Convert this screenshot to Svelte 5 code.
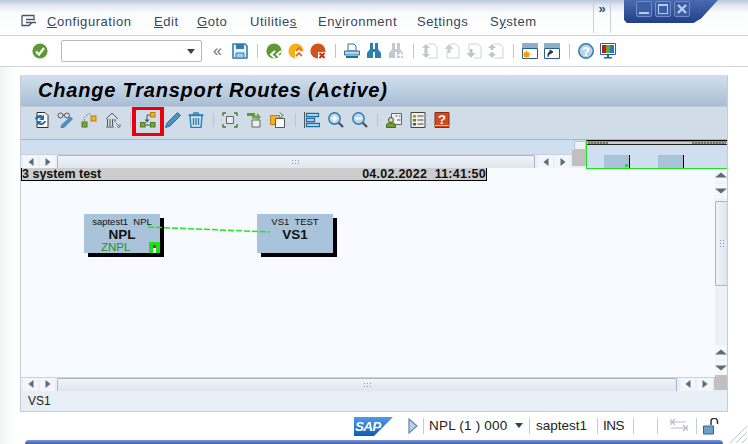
<script>
  const menus = [
    { pre: "", key: "C", post: "onfiguration", w: 107 },
    { pre: "", key: "E", post: "dit", w: 43 },
    { pre: "", key: "G", post: "oto", w: 53 },
    { pre: "Utilitie", key: "s", post: "", w: 68 },
    { pre: "En", key: "v", post: "ironment", w: 99 },
    { pre: "Se", key: "t", post: "tings", w: 73 },
    { pre: "S", key: "y", post: "stem", w: 60 }
  ];
</script>

{#snippet sep()}
  <span class="sep"></span>
{/snippet}

<div class="screen">
  <header class="menubar">
    <svg class="menu-icon" width="16" height="14" viewBox="0 0 16 14" fill="none" stroke="#44566e" stroke-width="1.3">
      <path d="M1 1.500h12v3M1 1.500v10h7l3-3h4M5 5.500h9M5 8.500h5" />
    </svg>
    <nav class="menus">
      {#each menus as m}
        <span class="menu" style="width:{m.w}px">{m.pre}<u>{m.key}</u>{m.post}</span>
      {/each}
    </nav>
    <div class="more">»</div>
  </header>

  <div class="winctl">
    <span class="winbtn"><i class="min"></i></span>
    <span class="winbtn"><i class="max"></i></span>
    <span class="winbtn">
      <svg width="12" height="12" viewBox="0 0 12 12"><path d="M2 2l8 8M10 2l-8 8" stroke="#b9cdf2" stroke-width="2.400" /></svg>
    </span>
  </div>

  <div class="toolbar">
    <svg class="ok" width="16" height="16" viewBox="0 0 16 16">
      <circle cx="8" cy="8" r="7.600" fill="#5d9a35" />
      <path d="M4 8.500l3 3 5-6.500" fill="none" stroke="#fff" stroke-width="2.200" />
    </svg>
    <div class="cmd"><span class="caret"></span></div>
    <span class="chev">«</span>
    <svg class="ic" viewBox="0 0 16 16">
      <path d="M1 1h12l2 2v12H1z" fill="#eaf2f9" stroke="#2f7eb3" stroke-width="1.600" />
      <path d="M4 1h8v5H4z" fill="#2f7eb3" />
      <path d="M4 10h8v5H4z" fill="#a9cbe3" stroke="#2f7eb3" />
    </svg>
    {@render sep()}
    <svg class="ic" viewBox="0 0 16 16">
      <circle cx="8" cy="8" r="7.600" fill="#5d9a35" />
      <path d="M9 8l-4 3.500 4 3.500M15 8l-4 3.500 4 3.500" fill="none" stroke="#fff" stroke-width="2" />
    </svg>
    <svg class="ic gap6" viewBox="0 0 16 16">
      <circle cx="8" cy="8" r="7.600" fill="#f6b21c" />
      <path d="M7 15V8l4-3 4 3v7z" fill="#fff" />
      <path d="M8 8l3-3 3 3M8 13l3-3 3 3" fill="none" stroke="#e2701a" stroke-width="1.800" />
    </svg>
    <svg class="ic gap6" viewBox="0 0 16 16">
      <circle cx="8" cy="8" r="7.600" fill="#d4521c" />
      <path d="M8 9h8v7H8z" fill="#fff" />
      <path d="M9.500 10l5 5M14.500 10l-5 5" stroke="#c62f16" stroke-width="2" />
    </svg>
    {@render sep()}
    <svg class="ic" viewBox="0 0 16 16">
      <path d="M4 1h6l2 2v5H4z" fill="#fff" stroke="#2d6f9e" />
      <path d="M0.500 8h15v4h-15z" fill="#b5d2e6" stroke="#2d6f9e" />
      <path d="M2 14h12" stroke="#1d6fa5" stroke-width="2" />
    </svg>
    <svg class="ic gap6" viewBox="0 0 16 16" fill="#2d7fb0">
      <path d="M4 0h3v6h2V0h3v6l3 4v5H9V9H7v6H1v-5l3-4z" />
    </svg>
    <svg class="ic gap6" viewBox="0 0 16 16" fill="#c3c9cf">
      <path d="M4 0h3v6h2V0h3v6l3 4v5H9V9H7v6H1v-5l3-4z" />
      <path d="M10 12h5M12.500 9.500v5" stroke="#fff" stroke-width="1.500" />
    </svg>
    {@render sep()}
    <svg class="ic" viewBox="0 0 16 16" fill="none" stroke="#cdd3d9">
      <path d="M6 1h6l3 3v11H6" /><path d="M4 1L0 5h2.500v3h3V5H8zM4 15l-4-4h2.500V8h3v3H8z" fill="#c0c6cc" stroke="none" />
    </svg>
    <svg class="ic gap6" viewBox="0 0 16 16" fill="none" stroke="#cdd3d9">
      <path d="M6 1h6l3 3v11H3V8" /><path d="M5 1L0.500 6h3v4h3V6h3z" fill="#c8ced4" stroke="none" />
    </svg>
    <svg class="ic gap6" viewBox="0 0 16 16" fill="none" stroke="#cdd3d9">
      <path d="M3 7V1h9l3 3v11H8" /><path d="M5 15L0.500 10h3V6h3v4h3z" fill="#c0c6cc" stroke="none" />
    </svg>
    <svg class="ic gap6" viewBox="0 0 16 16" fill="none" stroke="#cdd3d9">
      <path d="M6 1h6l3 3v11H6" /><path d="M4 1L0 5h2.500v2h3V5H8zM4 15l-4-4h2.500V9h3v2H8z" fill="#c0c6cc" stroke="none" />
    </svg>
    {@render sep()}
    <svg class="ic" viewBox="0 0 16 16">
      <path d="M0.500 5.500h15v10h-15z" fill="#fff" stroke="#22618e" />
      <path d="M0 0h16v5H0z" fill="#8faecb" />
      <circle cx="4.500" cy="11.500" r="2.600" fill="#f09a16" />
      <path d="M4.500 7.500v8M0.500 11.500h8M2 9l5 5M7 9l-5 5" stroke="#f09a16" />
    </svg>
    <svg class="ic gap6" viewBox="0 0 16 16">
      <path d="M0.500 5.500h15v10h-15z" fill="#fff" stroke="#22618e" />
      <path d="M0 0h16v5H0z" fill="#8faecb" />
      <path d="M4 14v-3q0-2 3-2M6 7l3 2-3 2z" stroke="#333" fill="#333" />
    </svg>
    {@render sep()}
    <svg class="ic" viewBox="0 0 16 16">
      <circle cx="8" cy="8" r="7.200" fill="#b9d3e8" stroke="#2f78ad" stroke-width="1.500" />
      <text x="8" y="12.500" class="qm">?</text>
    </svg>
    <svg class="ic gap6" viewBox="0 0 16 16">
      <path d="M0.500 0.500h15v11h-15z" fill="#fff" stroke="#1e6a9c" />
      <path d="M2 2h4v8H2z" fill="#c8141c" />
      <path d="M6 2h4v8H6z" fill="#6fa62c" />
      <path d="M10 2h4v8h-4z" fill="#1f7fc4" />
      <path d="M7 12h2v2H7zM4 14h8v1.500H4z" fill="#1e6a9c" />
    </svg>
  </div>

  <main class="panel">
    <h1 class="title">Change Transport Routes (Active)</h1>

    <div class="appbar">
      <svg class="ic" viewBox="0 0 16 16">
        <path d="M4 0.500h8l3 3v12H4z" fill="#fff" stroke="#333" />
        <path d="M2 7a5 5 0 0 1 8-3l1-2v6H6l2-1.500A3 3 0 0 0 4 8zM13 9a5 5 0 0 1-8 3l-1 2V9h5l-2 1.500A3 3 0 0 0 11 9z" fill="#1d70b0" />
      </svg>
      <svg class="ic gap6" viewBox="0 0 16 16">
        <circle cx="3.500" cy="3.500" r="2.500" fill="none" stroke="#555" />
        <circle cx="10" cy="3.500" r="2.500" fill="none" stroke="#555" />
        <path d="M6 3h1.500" stroke="#555" />
        <path d="M13.500 5l2 2L7 15.500l-3 .5.500-3z" fill="#4b92c6" stroke="#2a6c9c" stroke-width=".6" />
      </svg>
      <svg class="ic gap6" viewBox="0 0 16 16">
        <path d="M3.500 9V5l4-3h2" fill="none" stroke="#888" stroke-dasharray="2 1" />
        <rect x="1" y="10" width="5" height="5" fill="#7ba63a" stroke="#4d7a20" />
        <rect x="10" y="4" width="5" height="5" fill="#f3b31f" stroke="#b87d14" />
      </svg>
      <svg class="ic gap6" viewBox="0 0 16 16" fill="none" stroke="#555">
        <path d="M1 7l6-6 6 6" /><path d="M2.500 7v7M5 7v7M7.500 7v7M10 7v3M1 15h8" /><path d="M11 11l4 4M15 12v3h-3" stroke="#777" />
      </svg>
      {@render sep()}
      <span class="hilite">
        <svg class="ic" viewBox="0 0 16 16">
          <path d="M5 13h6M10 3H7v7" fill="none" stroke="#555" />
          <path d="M4.500 7.500L7 10.500l2.500-3z" fill="#555" />
          <rect x="10.500" y="0.500" width="4.500" height="4.500" fill="#f3b31f" stroke="#b87d14" />
          <rect x="0.500" y="10.500" width="4.500" height="4.500" fill="#7ba63a" stroke="#4d7a20" />
          <rect x="10.500" y="10.500" width="4.500" height="4.500" fill="#7ba63a" stroke="#4d7a20" />
        </svg>
      </span>
      <svg class="ic pencil" viewBox="0 0 16 16">
        <path d="M12.500 0.500l3 3L5 14l-4.500 1.500L2 11z" fill="#4b92c6" stroke="#2a6c9c" />
      </svg>
      <svg class="ic trash" viewBox="0 0 16 16" fill="none" stroke="#2f7eb3" stroke-width="1.400">
        <path d="M0.500 3h15M5 3l1-2h4l1 2" />
        <path d="M2 3.500l1 12h10l1-12z" fill="#d9e7f1" />
        <path d="M5.500 6v7M8 6v7M10.500 6v7" />
      </svg>
      {@render sep()}
      <svg class="ic" viewBox="0 0 16 16" fill="none">
        <path d="M4.500 4.500h7v7h-7z" fill="#e6edf3" stroke="#666" />
        <path d="M1 4V1h3M12 1h3v3M1 12v3h3M15 12v3h-3" stroke="#3d8030" stroke-width="1.400" />
      </svg>
      <svg class="ic gap6" viewBox="0 0 16 16">
        <path d="M1 1h8v3H1z" fill="#5c9a35" />
        <path d="M6 8h8v7H6z" fill="#eee" stroke="#666" />
        <path d="M6 3.500h5V1l4 4-4 4V6.500H6z" fill="#69a83a" />
      </svg>
      <svg class="ic gap6" viewBox="0 0 16 16">
        <path d="M0.500 3.500h9v9h-9z" fill="#f7b21e" stroke="#c07f12" />
        <path d="M5.500 6.500h9v9h-9z" fill="#fff" stroke="#555" />
        <path d="M10 0.500l3 3-3 3" fill="none" stroke="#555" />
      </svg>
      {@render sep()}
      <svg class="ic" viewBox="0 0 16 16">
        <path d="M0.500 0v16" stroke="#555" />
        <path d="M2.500 1.500h12v3h-12zM2.500 6.500h8v3h-8zM2.500 11.500h13v3h-13z" fill="#e3edf5" stroke="#1d6fa5" stroke-width="1.300" />
      </svg>
      <svg class="ic gap6" viewBox="0 0 16 16">
        <path d="M10 10l5 5" stroke="#555" stroke-width="2.400" />
        <circle cx="6.500" cy="6.500" r="5.700" fill="#bcd7ea" stroke="#2f78ad" stroke-width="1.400" />
        <path d="M3.500 6.500h6M6.500 3.500v6" stroke="#fff" stroke-width="2" />
      </svg>
      <svg class="ic gap6" viewBox="0 0 16 16">
        <path d="M10 10l5 5" stroke="#555" stroke-width="2.400" />
        <circle cx="6.500" cy="6.500" r="5.700" fill="#bcd7ea" stroke="#2f78ad" stroke-width="1.400" />
        <path d="M3.500 6.500h6" stroke="#fff" stroke-width="2" />
      </svg>
      {@render sep()}
      <svg class="ic" viewBox="0 0 16 16">
        <path d="M5.500 1.500h10v11h-10z" fill="#f0f3f6" stroke="#666" />
        <circle cx="5" cy="8" r="2.500" fill="#f3d7b5" stroke="#444" />
        <path d="M0.500 15.500v-3l2-1.500h5l2 1.500v3z" fill="#6fa02e" stroke="#46701a" />
        <path d="M9.500 4h2M13 4h1.500M11 8h3.500" stroke="#555" />
      </svg>
      <svg class="ic gap6" viewBox="0 0 16 16">
        <path d="M1 0.500h14v15H1z" fill="#f3f1e6" stroke="#444" />
        <path d="M3 3h3v2.500H3z" fill="#c98a1c" />
        <path d="M3 7h3v2.500H3z" fill="#4e8e2a" />
        <path d="M3 11h3v2.500H3z" fill="#1e6a9c" />
        <path d="M7.500 4h6M7.500 8h6M7.500 12h6" stroke="#444" />
      </svg>
      <svg class="ic gap6" viewBox="0 0 16 16">
        <path d="M1 0.500h14v15H1z" fill="#cf4a1f" stroke="#8c2c0e" />
        <path d="M1 13.500h14" stroke="#f0c2a8" />
        <text x="8" y="11.500" class="qm">?</text>
      </svg>
    </div>

    <div class="work">
      <div class="strip"></div>

      <div class="hscroll">
        <span class="arrow left"></span>
        <span class="arrow right"></span>
        <span class="track short"><span class="grip"></span></span>
        <span class="arrow left"></span>
        <span class="arrow right"></span>
      </div>

      <div class="canvas-row">
        <div class="canvas">
          <div class="caption">
            <span>3 system test</span>
            <span class="stamp">04.02.2022&nbsp; 11:41:50</span>
          </div>

          <div class="node npl">
            <div class="node-top">saptest1&nbsp; NPL</div>
            <div class="node-name">NPL</div>
            <div class="node-sub">ZNPL</div>
            <span class="light"><i></i></span>
          </div>
          <div class="node vs1">
            <div class="node-top">VS1&nbsp; TEST</div>
            <div class="node-name">VS1</div>
          </div>
          <svg class="route" width="130" height="12" viewBox="0 0 130 12">
            <path d="M0 5L122 10" stroke="#1ee81e" stroke-width="1.500" stroke-dasharray="6 2" />
          </svg>
        </div>

        <div class="vscroll">
          <span class="arrow up"></span>
          <span class="arrow down"></span>
          <span class="vthumb"><span class="vgrip"></span></span>
          <span class="vfill"></span>
          <span class="arrow up"></span>
          <span class="arrow down"></span>
        </div>
      </div>

      <div class="overview">
        <div class="ov-cap"><span></span><span></span></div>
        <div class="ov-node a"><i></i></div>
        <div class="ov-node b"></div>
      </div>
      <div class="ov-thumb"></div>
      <div class="ov-gray"></div>

      <div class="hscroll bottom">
        <span class="arrow left"></span>
        <span class="arrow right"></span>
        <span class="track"><span class="grip"></span></span>
        <span class="arrow left"></span>
        <span class="arrow right"></span>
        <span class="corner"></span>
      </div>
    </div>

    <div class="message">VS1</div>
  </main>

  <footer class="statusbar">
    <svg class="sap" width="40" height="19" viewBox="0 0 40 19">
      <defs>
        <linearGradient id="sapfill" x1="0" y1="0" x2="0" y2="1">
          <stop offset="0" stop-color="#4f9be8" />
          <stop offset="1" stop-color="#1259b4" />
        </linearGradient>
      </defs>
      <path d="M0 0h39L20 19H0z" fill="url(#sapfill)" />
      <text x="1" y="13.500" class="saptext">SAP</text>
    </svg>
    <svg class="play" width="10" height="16" viewBox="0 0 10 16">
      <path d="M1 1l8 7-8 7z" fill="#bcd0e6" stroke="#6c8bad" stroke-width="1.300" />
    </svg>
    <span class="cell sys">NPL (1 ) 000 <i class="caret small"></i></span>
    <span class="cell user">saptest1</span>
    <span class="cell ins">INS</span>
    <span class="cell blank"></span>
    <span class="cell conn">
      <svg width="18" height="14" viewBox="0 0 18 14" fill="none" stroke="#b5bcc4" stroke-width="1.200">
        <path d="M1 4h15M1 1v6M5 1L2 4l3 3M1 10h15M17 7v6M13 7l3 3-3 3" />
      </svg>
    </span>
    <span class="lock">
      <svg width="16" height="17" viewBox="0 0 16 17">
        <path d="M8 7V3.500a3 3 0 0 1 6.500 0V6" fill="none" stroke="#333" stroke-width="1.500" />
        <path d="M0.500 8h10v8h-10z" fill="#6f9fc7" stroke="#1f6a9f" />
      </svg>
    </span>
  </footer>

  <div class="blue-edge"></div>
  <svg class="resize" width="22" height="22" viewBox="0 0 22 22" stroke="#c3c8ce">
    <path d="M21 4L4 21M21 10L10 21M21 16l-5 5" />
  </svg>
</div>

<style>
  :global(body) {
    margin: 0;
    background: #fff;
  }

  .screen {
    position: relative;
    width: 748px;
    height: 444px;
    overflow: hidden;
    font-family: "Liberation Sans", Arial, sans-serif;
    color: #111;
    background: linear-gradient(90deg, #f2f3f5 0, #fff 14px);
  }

  .menubar {
    display: flex;
    align-items: flex-start;
    height: 36px;
    box-sizing: border-box;
    padding-left: 21px;
    border-bottom: 1px solid #c8d0dc;
    background: linear-gradient(#b9c5db 0, #dfe5ef 5px, #fbfcfd 13px, #fff 100%);
  }

  .menu-icon {
    margin-top: 14px;
  }

  .menus {
    display: flex;
    margin-left: 10px;
    margin-top: 14px;
  }

  .menu {
    display: block;
    font-size: 13px;
    letter-spacing: 0.55px;
    color: #33475f;
    line-height: 16px;
    white-space: nowrap;
  }

  .more {
    position: absolute;
    left: 593px;
    top: 2px;
    width: 16px;
    height: 31px;
    border-left: 1px solid #c8ced8;
    border-right: 1px solid #c8ced8;
    text-align: center;
    color: #2a4f93;
    font-size: 13px;
    font-weight: bold;
    line-height: 13px;
  }

  .winctl {
    position: absolute;
    left: 624px;
    top: 0;
    width: 94px;
    height: 23px;
    padding: 1px 0 0 12px;
    box-sizing: border-box;
    display: flex;
    gap: 3px;
    background: linear-gradient(#4a6ab0, #1f3f87);
    clip-path: polygon(0 0, 100% 0, 82% 80%, 74% 100%, 3% 100%, 0 86%);
  }

  .winbtn {
    width: 16px;
    height: 16px;
    box-sizing: border-box;
    border: 1px solid #6f8cc6;
    border-radius: 2px;
    background: #3c5ea4;
    display: flex;
    align-items: center;
    justify-content: center;
  }

  .winbtn .min {
    width: 10px;
    height: 2px;
    margin-top: 8px;
    background: #b9cdf2;
  }

  .winbtn .max {
    width: 8px;
    height: 7px;
    border: 1px solid #b9cdf2;
    border-top-width: 2px;
  }

  .toolbar {
    display: flex;
    align-items: center;
    height: 31px;
    box-sizing: border-box;
    padding-left: 32px;
    border-bottom: 1px solid #ced3da;
    background: #fff;
  }

  .ic {
    width: 16px;
    height: 16px;
    flex: none;
    display: block;
  }

  .gap6 {
    margin-left: 6px;
  }

  .appbar .gap6 {
    margin-left: 8px;
  }

  .sep {
    flex: none;
    width: 1px;
    height: 14px;
    margin: 0 8px 0 9px;
    background: #b4c8da;
  }

  .cmd {
    position: relative;
    width: 141px;
    height: 22px;
    margin-left: 13px;
    box-sizing: border-box;
    border: 1px solid #b5b9be;
    border-radius: 2px;
    background: #fff;
  }

  .caret {
    position: absolute;
    right: 6px;
    top: 8px;
    border-left: 4px solid transparent;
    border-right: 4px solid transparent;
    border-top: 5px solid #2b4363;
  }

  .chev {
    width: 19px;
    margin-left: 11px;
    font-size: 16px;
    line-height: 14px;
    color: #66727f;
  }

  .qm {
    font-family: "Liberation Sans", sans-serif;
    font-size: 13px;
    font-weight: bold;
    text-anchor: middle;
    fill: #fff;
  }

  .panel {
    position: relative;
    width: 708px;
    height: 337px;
    margin: 8px 0 0 20px;
    box-sizing: border-box;
    border: 1px solid #c5ccd6;
    border-top: 0;
    background: #e8eef5;
  }

  .title {
    height: 31px;
    margin: 0;
    padding-left: 17px;
    box-sizing: border-box;
    background: linear-gradient(#d3e0ec, #a7bed6);
    font-size: 20px;
    line-height: 31px;
    font-style: italic;
    font-weight: bold;
    letter-spacing: 0.8px;
    color: #000;
    white-space: nowrap;
  }

  .appbar {
    display: flex;
    align-items: center;
    height: 34px;
    box-sizing: border-box;
    padding: 0 0 6px 12px;
    border-top: 1px solid #bfcbd8;
    border-bottom: 1px solid #a9b6c3;
    background: #d0dce8;
  }

  .hilite {
    flex: none;
    width: 32px;
    height: 29px;
    margin: 3px 1px 0 -7px;
    padding-top: 2px;
    border-style: solid;
    border-color: #e8000d;
    border-width: 3px 4px;
    box-sizing: border-box;
    display: flex;
    align-items: flex-start;
    justify-content: center;
  }

  .trash {
    margin-left: 7px;
  }

  .work {
    position: relative;
    height: 250px;
    background: #f7faff;
  }

  .strip {
    height: 14px;
    background: #cfdfef;
  }

  .hscroll {
    display: flex;
    align-items: center;
    height: 14px;
    box-sizing: border-box;
    padding-left: 2px;
    background: #eaf0f6;
    border-top: 1px solid #c8d2dc;
  }

  .hscroll .arrow {
    flex: none;
    position: relative;
    width: 15px;
    height: 13px;
    margin-right: 2px;
    background: #f3f6fa;
  }

  .arrow::before {
    content: "";
    position: absolute;
    left: 50%;
    top: 50%;
    transform: translate(-50%, -50%);
  }

  .arrow.left::before {
    border-top: 4px solid transparent;
    border-bottom: 4px solid transparent;
    border-right: 5px solid #5a6d7d;
  }

  .arrow.right::before {
    border-top: 4px solid transparent;
    border-bottom: 4px solid transparent;
    border-left: 5px solid #5a6d7d;
  }

  .arrow.up::before {
    border-left: 6px solid transparent;
    border-right: 6px solid transparent;
    border-bottom: 5px solid #5a6d7d;
  }

  .arrow.down::before {
    border-left: 6px solid transparent;
    border-right: 6px solid transparent;
    border-top: 5px solid #5a6d7d;
  }

  .track {
    flex: none;
    position: relative;
    width: 620px;
    height: 13px;
    margin-right: 3px;
    box-sizing: border-box;
    border: 1px solid #a9b6c3;
    border-bottom: 0;
    border-radius: 2px 2px 0 0;
    background: linear-gradient(#f0f4f8, #dde6ef);
  }

  .track.short {
    width: 478px;
  }

  .grip {
    position: absolute;
    left: 305px;
    top: 3px;
    width: 9px;
    height: 6px;
    background-image: radial-gradient(#8c98a4 0.8px, transparent 1px);
    background-size: 3px 3px;
  }

  .track.short .grip {
    left: 233px;
  }

  .canvas-row {
    display: flex;
    height: 209px;
  }

  .canvas {
    position: relative;
    flex: 1;
    background: #f7faff;
  }

  .caption {
    display: flex;
    justify-content: space-between;
    box-sizing: border-box;
    width: 466px;
    height: 13px;
    border-bottom: 1px solid #000;
    border-right: 1px solid #000;
    border-left: 1px solid #000;
    background: #ccc;
    font-size: 12.500px;
    font-weight: bold;
    line-height: 12px;
    white-space: nowrap;
  }

  .stamp {
    letter-spacing: 0.25px;
  }

  .node {
    position: absolute;
    width: 76px;
    height: 39px;
    background: #a9c3da;
    box-shadow: 4px 4px 0 #000;
    text-align: center;
  }

  .node.npl {
    left: 63px;
    top: 46px;
  }

  .node.vs1 {
    left: 236px;
    top: 46px;
  }

  .node-top {
    font-size: 9.500px;
    line-height: 11px;
    margin-top: 2px;
    padding-top: 0;
  }

  .node-name {
    font-size: 13.500px;
    font-weight: bold;
    line-height: 15px;
  }

  .node-sub {
    font-size: 11.500px;
    line-height: 11px;
    color: #1f9422;
    text-align: left;
    padding-left: 17px;
  }

  .light {
    position: absolute;
    left: 65px;
    top: 28px;
    width: 11px;
    height: 11px;
    background: #1fe01f;
  }

  .light i {
    position: absolute;
    left: 4px;
    top: 3px;
    width: 3px;
    height: 3px;
    background: #e01818;
    box-shadow: 0 3px 0 #f4f4f4, 0 5px 0 #f4f4f4;
  }

  .route {
    position: absolute;
    left: 127px;
    top: 54px;
  }

  .vscroll {
    flex: none;
    width: 12px;
    display: flex;
    flex-direction: column;
    align-items: center;
    background: #eef2f7;
  }

  .vscroll .arrow {
    position: relative;
    flex: none;
    width: 12px;
    height: 14px;
    margin-bottom: 2px;
    background: #f5f8fb;
  }

  .vthumb {
    position: relative;
    flex: none;
    width: 12px;
    height: 85px;
    margin: 1px 0 2px;
    box-sizing: border-box;
    border: 1px solid #a9b6c3;
    border-right: 0;
    border-radius: 2px 0 0 2px;
    background: linear-gradient(90deg, #f0f4f8, #dde6ef);
  }

  .vgrip {
    position: absolute;
    left: 3px;
    top: 37px;
    width: 6px;
    height: 9px;
    background-image: radial-gradient(#8c98a4 0.8px, transparent 1px);
    background-size: 3px 3px;
  }

  .vfill {
    flex: 1;
  }

  .overview {
    position: absolute;
    left: 565px;
    top: 0;
    width: 141px;
    height: 29px;
    box-sizing: border-box;
    border-top: 1px solid #000;
    border-left: 1px solid #1ee01e;
    border-bottom: 1px solid #1ee01e;
    background: #cfdfef;
  }

  .ov-cap {
    display: flex;
    justify-content: space-between;
    height: 2px;
    border-top: 1px solid #1ee01e;
    border-bottom: 1px solid #222;
    background: #ccc;
  }

  .ov-cap span {
    width: 20px;
    margin: 0 1px;
    background-image: repeating-linear-gradient(90deg, #776 0 2px, #aa9 2px 3px);
  }

  .ov-cap span:last-child {
    width: 34px;
  }

  .ov-node {
    position: absolute;
    top: 14px;
    width: 25px;
    height: 13px;
    background: #a9c3da;
    border-right: 1px solid #000;
  }

  .ov-node.a {
    left: 17px;
  }

  .ov-node.b {
    left: 71px;
  }

  .ov-node i {
    position: absolute;
    right: 1px;
    bottom: 1px;
    width: 3px;
    height: 3px;
    background: #1ee01e;
  }

  .ov-thumb {
    position: absolute;
    left: 553px;
    top: 1px;
    width: 10px;
    height: 7px;
    border: 1px solid #b8c3cf;
    border-radius: 1px;
    background: #eef2f7;
  }

  .ov-gray {
    position: absolute;
    left: 551px;
    top: 10px;
    width: 14px;
    height: 16px;
    background: #c0c0c0;
  }

  .hscroll.bottom {
    height: 13px;
  }

  .corner {
    flex: none;
    align-self: flex-end;
    width: 13px;
    height: 15px;
    background: #c0c0c0;
  }

  .message {
    height: 21px;
    padding-left: 7px;
    box-sizing: border-box;
    font-size: 12px;
    line-height: 22px;
    color: #222;
    background: #e8eef5;
  }

  .statusbar {
    display: flex;
    align-items: center;
    height: 22px;
    margin-top: 3px;
    padding-left: 354px;
    font-size: 13.500px;
    color: #222;
    white-space: nowrap;
  }

  .saptext {
    font-family: "Liberation Sans", sans-serif;
    font-size: 13.500px;
    font-style: italic;
    font-weight: bold;
    letter-spacing: -0.8px;
    fill: #fff;
  }

  .play {
    margin-left: 14px;
    margin-right: 5px;
  }

  .cell {
    position: relative;
    display: block;
    height: 16px;
    line-height: 16px;
    box-sizing: border-box;
    border-left: 1px solid #c6ccd3;
    padding-left: 6px;
  }

  .sys {
    width: 106px;
    padding-left: 5px;
    letter-spacing: 0.2px;
  }

  .caret.small {
    right: 6px;
    top: 5px;
  }

  .user {
    width: 68px;
  }

  .ins {
    width: 36px;
    padding-left: 5px;
    letter-spacing: -0.5px;
  }

  .blank {
    width: 25px;
    border-right: 1px solid #c6ccd3;
  }

  .conn {
    width: 39px;
    padding-left: 12px;
    border-left: 0;
    border-right: 1px solid #c6ccd3;
  }

  .lock {
    margin-left: 6px;
    line-height: 0;
  }

  .blue-edge {
    position: absolute;
    left: 25px;
    right: 25px;
    bottom: 0;
    height: 4px;
    border-radius: 12px 12px 0 0;
    background: linear-gradient(#7e98d8, #3a5fb0);
  }

  .resize {
    position: absolute;
    right: 0;
    bottom: 0;
  }
</style>
